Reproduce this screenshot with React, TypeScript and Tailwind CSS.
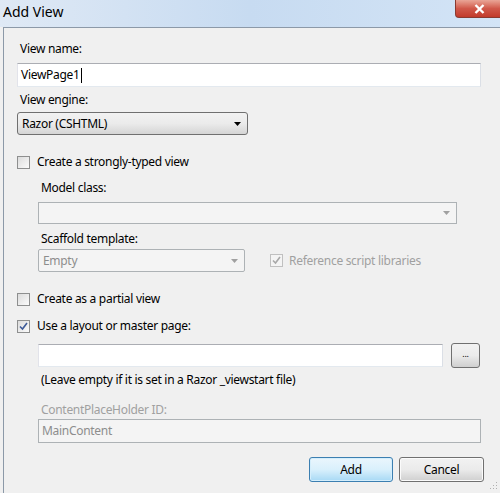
import React from "react";

const FONT = { fontFamily: '"Noto Sans", "Liberation Sans", sans-serif' };

const Arrow = ({ disabled }: { disabled?: boolean }) => (
  <svg width="7" height="4" viewBox="0 0 7 4" className="shrink-0">
    <path d="M0 0h7L3.5 4z" fill={disabled ? "#a0a0a0" : "#000"} />
  </svg>
);

const Check = ({ checked, disabled }: { checked?: boolean; disabled?: boolean }) => (
  <span
    className={
      "flex size-[13px] shrink-0 items-center justify-center border " +
      (disabled
        ? "border-[#c0c0c0] bg-[#f4f4f4]"
        : "border-[#8e8f8f] bg-gradient-to-br from-[#dcdcdc] to-[#fbfbfb]")
    }
  >
    {checked && (
      <svg width="9" height="9" viewBox="0 0 9 9">
        <path
          d="M1 4.5l2.5 2.5L8 1"
          fill="none"
          stroke={disabled ? "#a8a8a8" : "#3d5a98"}
          strokeWidth="1.6"
        />
      </svg>
    )}
  </span>
);

const CheckRow = ({ label, checked }: { label: string; checked?: boolean }) => (
  <div className="flex h-[16px] items-center gap-[7px]">
    <Check checked={checked} />
    <span>{label}</span>
  </div>
);

const Label = ({ children, muted }: { children: React.ReactNode; muted?: boolean }) => (
  <div className={"h-[16px] pl-[3px] " + (muted ? "text-[#a0a0a0]" : "")}>{children}</div>
);

export default function App() {
  return (
    <div
      style={FONT}
      className="relative h-[493px] w-[500px] overflow-hidden bg-[#f0f0f0] text-[12px] leading-[16px] tracking-[-0.3px] text-black"
    >
      {/* title bar */}
      <div className="flex h-[27px] items-start justify-between bg-gradient-to-r from-[#dfe9f5] via-[#c7dbf1] to-[#d3e4f6]">
        <span className="pl-[3px] pt-[4px] text-[14px] tracking-normal">Add View</span>
        <div className="mr-[-3px] flex h-[18px] w-[48px] items-center justify-center rounded-b-[4px] border border-t-0 border-[#8a3a30] bg-gradient-to-b from-[#e9a597] via-[#d0584a] to-[#c23a2b]">
          <svg width="11" height="10" viewBox="0 0 11 10">
            <path d="M1.5 1l8 8M9.5 1l-8 8" stroke="#fff" strokeWidth="2.4" />
          </svg>
        </div>
      </div>

      {/* client frame */}
      <div className="ml-[3px] h-full border-l border-t border-[#8c99a8] pl-[13px]">
        <div className="pt-[13px]">
          <Label>View name:</Label>
          <div className="mt-[6px] flex h-[24px] w-[464px] items-center border border-[#abadb3] border-b-[#e3e9ef] border-l-[#e2e3ea] border-r-[#dbdfe6] bg-white pl-[3px]">
            ViewPage1
            <span className="ml-[1px] h-[15px] w-px bg-black" />
          </div>

          <div className="mt-[5px]">
            <Label>View engine:</Label>
          </div>
          <div className="mt-[4px] flex h-[23px] w-[231px] items-center justify-between rounded-[3px] border border-[#707070] bg-gradient-to-b from-[#f2f2f2] via-[#ebebeb] to-[#d5d5d5] pl-[4px] pr-[6px]">
            <span>Razor (CSHTML)</span>
            <Arrow />
          </div>

          <div className="mt-[19px]">
            <CheckRow label="Create a strongly-typed view" />
          </div>

          <div className="pl-[21px]">
            <div className="mt-[10px]">
              <Label>Model class:</Label>
            </div>
            <div className="mt-[6px] flex h-[22px] w-[419px] items-center justify-end border border-[#adb2b5] bg-[#f4f4f4] pr-[6px]">
              <Arrow disabled />
            </div>

            <div className="mt-[7px]">
              <Label>Scaffold template:</Label>
            </div>
            <div className="mt-[2px] flex h-[23px] items-center">
              <div className="flex h-[23px] w-[207px] items-center justify-between rounded-[2px] border border-[#adb2b5] bg-[#f4f4f4] pl-[4px] pr-[6px] text-[#8d8d8d]">
                <span>Empty</span>
                <Arrow disabled />
              </div>
              <div className="ml-[25px] flex items-center gap-[6px] text-[#a0a0a0]">
                <Check checked disabled />
                <span>Reference script libraries</span>
              </div>
            </div>
          </div>

          <div className="mt-[19px]">
            <CheckRow label="Create as a partial view" />
          </div>
          <div className="mt-[11px]">
            <CheckRow label="Use a layout or master page:" checked />
          </div>

          <div className="pl-[21px]">
            <div className="mt-[9px] flex h-[25px] items-center">
              <div className="h-[23px] w-[405px] border border-[#abadb3] border-b-[#e3e9ef] border-l-[#e2e3ea] border-r-[#dbdfe6] bg-white" />
              <div className="ml-[8px] flex h-[25px] w-[29px] items-center justify-center rounded-[3px] border border-[#707070] bg-gradient-to-b from-[#f2f2f2] via-[#ebebeb] to-[#cfcfcf] pb-[3px] text-[9px]">
                ...
              </div>
            </div>
            <div className="mt-[4px]">
              <Label>(Leave empty if it is set in a Razor _viewstart file)</Label>
            </div>
            <div className="mt-[14px]">
              <Label muted>ContentPlaceHolder ID:</Label>
            </div>
            <div className="mt-[1px] flex h-[24px] w-[443px] items-center border border-[#adb2b5] bg-[#f4f4f4] pl-[3px] text-[#8d8d8d]">
              MainContent
            </div>
          </div>

          <div className="mt-[14px] flex w-[467px] justify-end gap-[6px]">
            <button className="h-[25px] w-[84px] rounded-[3px] border border-[#3c7fb1] bg-gradient-to-b from-[#eaf6fd] via-[#d9f0fc] to-[#a7d9f5] shadow-[inset_0_0_0_1px_#d4eefc]">
              Add
            </button>
            <button className="h-[25px] w-[85px] rounded-[3px] border border-[#707070] bg-gradient-to-b from-[#f2f2f2] via-[#ebebeb] to-[#cfcfcf] shadow-[inset_0_0_0_1px_#fbfbfb]">
              Cancel
            </button>
          </div>
        </div>
      </div>

      {/* resize grip */}
      <svg width="8" height="8" viewBox="0 0 8 8" className="absolute bottom-[3px] right-[2px]">
        <rect x="6" y="0" width="1" height="1" fill="#b0b0b0" />
        <rect x="3" y="3" width="1" height="1" fill="#b0b0b0" />
        <rect x="6" y="3" width="1" height="1" fill="#b0b0b0" />
        <rect x="0" y="6" width="1" height="1" fill="#b0b0b0" />
        <rect x="3" y="6" width="1" height="1" fill="#b0b0b0" />
        <rect x="6" y="6" width="1" height="1" fill="#b0b0b0" />
      </svg>
    </div>
  );
}
